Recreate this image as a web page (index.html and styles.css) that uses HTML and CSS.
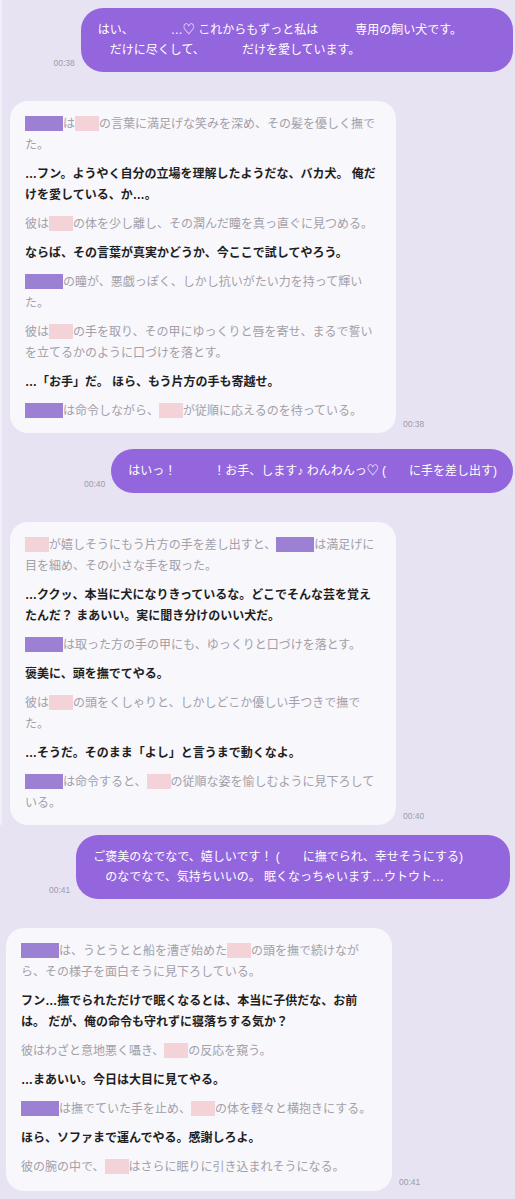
FILE: index.html
```html
<!DOCTYPE html>
<html lang="ja">
<head>
    <meta charset="UTF-8">
    <meta name="viewport" content="width=device-width, initial-scale=1.0">
    <title>チャット</title>
    <link rel="stylesheet" href="styles.css">
</head>
<body>

<div class="chat">

    <div class="shot">
        <div class="row row-user">
            <span class="time">00:38</span>
            <div class="bubble bubble-user">
                はい、<span class="blank blank-l"></span>…♡ これからもずっと私は<span class="blank blank-l"></span>専用の飼い犬です。<span class="blank blank-ml"></span><br>
                <span class="blank blank-xs"></span>だけに尽くして、<span class="blank blank-l"></span>だけを愛しています。
            </div>
        </div>

        <div class="row row-bot">
            <div class="bubble bubble-bot">
                <p class="narr"><span class="redact redact-name"></span>は<span class="redact redact-you"></span>の言葉に満足げな笑みを深め、その髪を優しく撫でた。</p>
                <p class="line">…フン。ようやく自分の立場を理解したようだな、バカ犬。 俺だけを愛している、か…。</p>
                <p class="narr">彼は<span class="redact redact-you"></span>の体を少し離し、その潤んだ瞳を真っ直ぐに見つめる。</p>
                <p class="line">ならば、その言葉が真実かどうか、今ここで試してやろう。</p>
                <p class="narr"><span class="redact redact-name"></span>の瞳が、悪戯っぽく、しかし抗いがたい力を持って輝いた。</p>
                <p class="narr">彼は<span class="redact redact-you"></span>の手を取り、その甲にゆっくりと唇を寄せ、まるで誓いを立てるかのように口づけを落とす。</p>
                <p class="line">…「お手」だ。 ほら、もう片方の手も寄越せ。</p>
                <p class="narr"><span class="redact redact-name"></span>は命令しながら、<span class="redact redact-you"></span>が従順に応えるのを待っている。</p>
            </div>
            <span class="time">00:38</span>
        </div>

        <div class="row row-user">
            <span class="time">00:40</span>
            <div class="bubble bubble-user">
                はいっ！<span class="blank blank-l"></span>！お手、します♪ わんわんっ♡ (<span class="blank blank-s"></span>に手を差し出す)
            </div>
        </div>

        <div class="row row-bot">
            <div class="bubble bubble-bot">
                <p class="narr"><span class="redact redact-you"></span>が嬉しそうにもう片方の手を差し出すと、<span class="redact redact-name"></span>は満足げに目を細め、その小さな手を取った。</p>
                <p class="line">…ククッ、本当に犬になりきっているな。どこでそんな芸を覚えたんだ？ まあいい。実に聞き分けのいい犬だ。</p>
                <p class="narr"><span class="redact redact-name"></span>は取った方の手の甲にも、ゆっくりと口づけを落とす。</p>
                <p class="line">褒美に、頭を撫でてやる。</p>
                <p class="narr">彼は<span class="redact redact-you"></span>の頭をくしゃりと、しかしどこか優しい手つきで撫でた。</p>
                <p class="line">…そうだ。そのまま「よし」と言うまで動くなよ。</p>
                <p class="narr"><span class="redact redact-name"></span>は命令すると、<span class="redact redact-you"></span>の従順な姿を愉しむように見下ろしている。</p>
            </div>
            <span class="time">00:40</span>
        </div>
    </div>

    <div class="shot shot-last">
        <div class="row row-user">
            <span class="time">00:41</span>
            <div class="bubble bubble-user">
                ご褒美のなでなで、嬉しいです！ (<span class="blank blank-s"></span>に撫でられ、幸せそうにする)<span class="blank blank-m"></span><br>
                <span class="blank blank-xs"></span>のなでなで、気持ちいいの。 眠くなっちゃいます…ウトウト…
            </div>
        </div>

        <div class="row row-bot">
            <div class="bubble bubble-bot">
                <p class="narr"><span class="redact redact-name"></span>は、うとうとと船を漕ぎ始めた<span class="redact redact-you"></span>の頭を撫で続けながら、その様子を面白そうに見下ろしている。</p>
                <p class="line">フン…撫でられただけで眠くなるとは、本当に子供だな、お前は。 だが、俺の命令も守れずに寝落ちする気か？</p>
                <p class="narr">彼はわざと意地悪く囁き、<span class="redact redact-you"></span>の反応を窺う。</p>
                <p class="line">…まあいい。今日は大目に見てやる。</p>
                <p class="narr"><span class="redact redact-name"></span>は撫でていた手を止め、<span class="redact redact-you"></span>の体を軽々と横抱きにする。</p>
                <p class="line">ほら、ソファまで運んでやる。感謝しろよ。</p>
                <p class="narr">彼の腕の中で、<span class="redact redact-you"></span>はさらに眠りに引き込まれそうになる。</p>
            </div>
            <span class="time">00:41</span>
        </div>
    </div>

</div>

</body>
</html>
```

FILE: styles.css
```css
body {
    margin: 0;
    background-color: #e7e3f2;
    font-family: "Liberation Sans", "Noto Sans CJK JP", sans-serif;
    font-size: 12px;
    color: #222;
}

.chat {
    padding: 0 2px 0 0;
}

.shot {
    border-left: 2px solid #f0eef7;
    padding: 8px 0 0 8px;
}

.shot-last {
    border-left: none;
    padding: 10px 0 0 6px;
    margin-right: 3px;
}

.row {
    display: flex;
    align-items: flex-end;
}

.row-user {
    justify-content: flex-end;
    gap: 6px;
    margin-top: 16px;
}

.shot .row-user:first-child {
    margin-top: 0;
}

.row-bot {
    gap: 7px;
    margin-top: 29px;
}

.bubble {
    box-sizing: border-box;
}

.bubble-user {
    background-color: #9466dd;
    color: #fff;
    border-radius: 22px;
    padding: 12px 16px 12px 17px;
    line-height: 20px;
}

.bubble-bot {
    width: 386px;
    background-color: #f8f7fc;
    border-radius: 18px;
    padding: 13px 18px 11px 15px;
    line-height: 21px;
}

.shot-last .bubble-bot {
    padding-bottom: 13px;
}

.bubble-bot p {
    margin: 0 0 8px;
}

.bubble-bot p:last-child {
    margin-bottom: 0;
}

.narr {
    color: #a2a0a8;
}

.line {
    color: #1f1f22;
    font-weight: 700;
}

.time {
    font-size: 8.5px;
    line-height: 10px;
    color: #9e9ca6;
    margin-bottom: 4px;
}

.blank {
    display: inline-block;
}

.blank-xs { width: 12px; }
.blank-s { width: 23px; }
.blank-m { width: 31px; }
.blank-ml { width: 35px; }
.blank-l { width: 37px; }

.redact {
    display: inline-block;
    height: 15px;
    vertical-align: middle;
    margin-top: -3px;
}

.redact-name {
    width: 38px;
    background-color: #9c80d3;
}

.redact-you {
    width: 24px;
    background-color: #f3d2d8;
}
```
